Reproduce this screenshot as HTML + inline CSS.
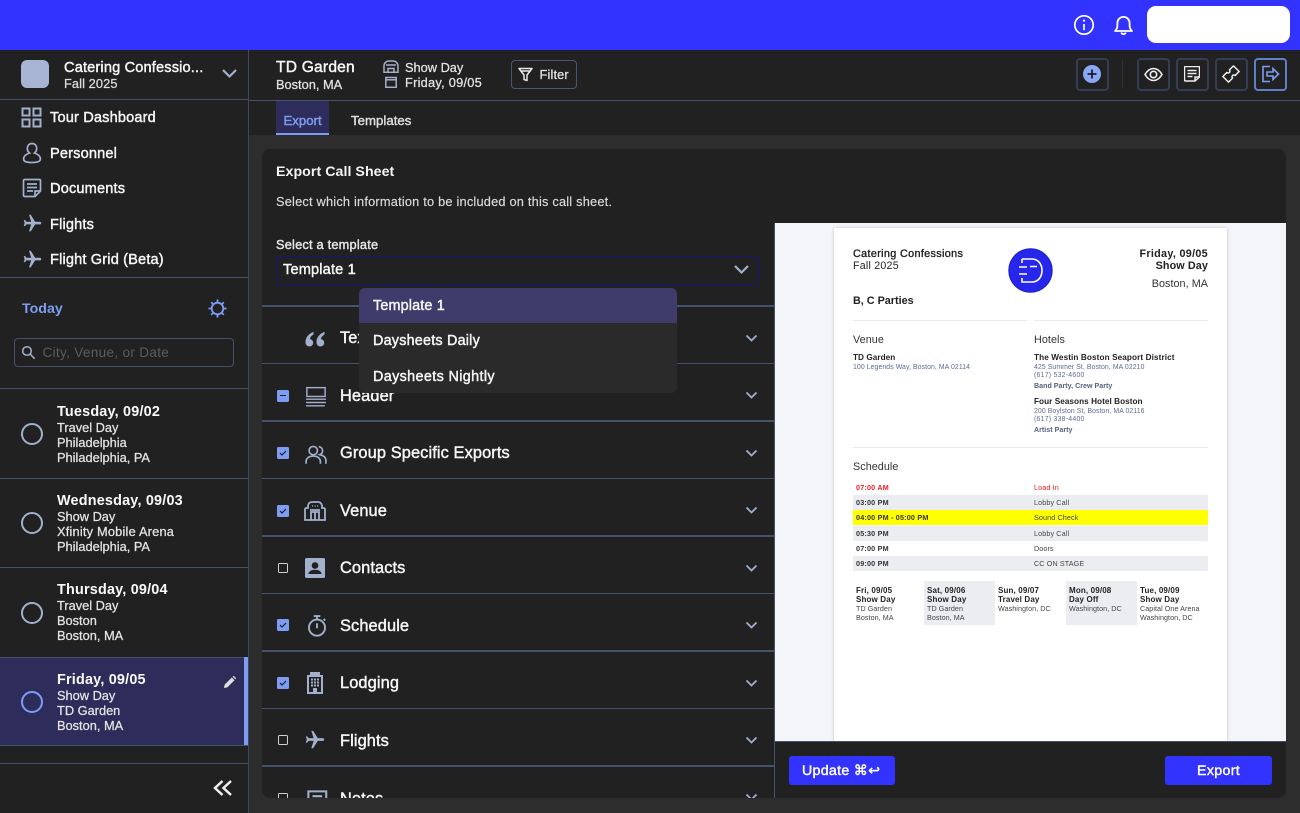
<!DOCTYPE html>
<html lang="en"><head><meta charset="utf-8"><title>Export Call Sheet</title>
<style>
html,body{margin:0;padding:0;width:1300px;height:813px;overflow:hidden;background:#2d2d2d}
body{font-family:"Liberation Sans",sans-serif;color:#f0f0f0;position:relative}
div,svg{position:absolute}
.t{position:absolute;white-space:nowrap;line-height:0;letter-spacing:.25px}
.m{-webkit-text-stroke:.42px currentColor}
.h{background:#46526c;height:1px}
.nav{font-size:14.6px;left:50px;color:#f6f6f6;letter-spacing:.15px}
.row{font-size:16.4px;left:340px;color:#f6f6f6;letter-spacing:.1px}
.d1{left:57px;font-size:14.4px;font-weight:700;color:#f9f9f9;letter-spacing:.2px}
.d2{left:57px;font-size:12.8px;color:#e4e4e4;-webkit-text-stroke:.25px currentColor;letter-spacing:0}
.ib{width:33px;height:33px;top:58px;border:2px solid #333e54;border-radius:4px;box-sizing:border-box}
.cb{left:278px;width:8px;height:8px;border:1.5px solid #cfcfcf;border-radius:1.5px}
.cb.on{width:12px;height:12px;border:0;background:#7d9df2;left:277px}
.ch{left:745px;width:13px;height:8px}
.ic{left:304px;width:22px;height:22px;fill:none;stroke:#a3b0cc}
.p{color:#222;font-size:10.6px}
.s{color:#5b6b92;font-size:6.9px;letter-spacing:.08px}
.b8{color:#222;font-size:8.2px;font-weight:700;letter-spacing:.05px}
.g{color:#55607f;font-size:7.1px;font-weight:700;letter-spacing:.02px}
.st{color:#333;font-size:7.2px;font-weight:700;letter-spacing:.2px}
.sr{color:#444;font-size:7.2px;letter-spacing:.12px}
.db{color:#222;font-size:8px;font-weight:700;letter-spacing:.15px}
.dr{color:#444;font-size:7.2px;letter-spacing:.05px}
.bar{background:#ecedf1;left:853px;width:355px}
</style></head><body>

<!-- top bar -->
<div style="left:0;top:0;width:1300px;height:50px;background:#3333ff"></div>
<svg style="left:1073px;top:14px" width="22" height="22" viewBox="0 0 22 22" fill="none" stroke="#fff" stroke-width="1.7"><circle cx="11" cy="11" r="9.2"/><path d="M11 10v6.200"/><circle cx="11" cy="6.600" r="1.100" fill="#fff" stroke="none"/></svg>
<svg style="left:1113px;top:14px" width="21" height="22" viewBox="0 0 21 22" fill="none" stroke="#fff" stroke-width="1.8" stroke-linejoin="round"><path d="M2 17c1.800-1.600 2.400-3 2.400-5.600V9a6.100 6.100 0 0 1 12.200 0v2.400c0 2.600.6 4 2.400 5.600z"/><path d="M8.300 18.500a2.300 2.300 0 0 0 4.400 0"/></svg>
<div style="left:1147px;top:6px;width:143px;height:37px;background:#fff;border-radius:9px"></div>

<!-- sidebar -->
<div style="left:0;top:50px;width:248px;height:763px;background:#212121"></div>
<div style="left:248px;top:50px;width:1px;height:763px;background:#3d4960"></div>
<div style="left:21px;top:60px;width:28px;height:28px;border-radius:6px;background:#a7b4d3"></div>
<span class="t m" style="left:64px;top:67.500px;font-size:14.6px;color:#f6f6f6;letter-spacing:.15px">Catering Confessio...</span>
<span class="t" style="left:64px;top:83.500px;font-size:12.8px;color:#dcdcdc;letter-spacing:.1px;-webkit-text-stroke:.25px #dcdcdc">Fall 2025</span>
<svg style="left:221px;top:68px" width="17" height="11" viewBox="0 0 17 11" fill="none" stroke="#a3b0cc" stroke-width="2.200"><path d="M2 2l6.500 6.500L15 2"/></svg>
<div class="h" style="left:0;top:99px;width:248px"></div>

<svg style="left:21px;top:107px" width="21" height="21" viewBox="0 0 21 21" fill="none" stroke="#a3b0cc" stroke-width="2"><rect x="1.500" y="1.500" width="7" height="7"/><rect x="12.500" y="1.500" width="7" height="7"/><rect x="1.500" y="12.500" width="7" height="7"/><rect x="12.500" y="12.500" width="7" height="7"/></svg>
<span class="t nav m" style="top:118px">Tour Dashboard</span>
<svg style="left:22px;top:142px" width="20" height="22" viewBox="0 0 20 22" fill="none" stroke="#a3b0cc" stroke-width="1.700"><path d="M10 1.500c3 0 4.700 2.300 4.700 5 0 2-1 3.500-2.300 4.500 3.700 1.200 6 3.300 6 6 0 2.500-2.500 3.500-8.400 3.500S1.600 19.500 1.600 17c0-2.700 2.300-4.800 6-6-1.300-1-2.300-2.500-2.300-4.500 0-2.700 1.700-5 4.700-5z"/></svg>
<span class="t nav m" style="top:153.500px">Personnel</span>
<svg style="left:22px;top:178px" width="20" height="20" viewBox="0 0 20 20" fill="none" stroke="#a3b0cc" stroke-width="1.700"><path d="M13 18.500H2.500a1 1 0 0 1-1-1v-15a1 1 0 0 1 1-1h15a1 1 0 0 1 1 1V13z"/><path d="M5 6h10M5 9.500h10M5 13h6M13 18.500V13h5.500"/></svg>
<span class="t nav m" style="top:188.500px">Documents</span>
<svg style="left:21.500px;top:213px" width="21" height="21" viewBox="0 0 24 24" fill="#a3b0cc"><path transform="rotate(90 12 12)" d="M21 16v-2l-8-5V3.500c0-.83-.67-1.500-1.500-1.500S10 2.670 10 3.500V9l-8 5v2l8-2.500V19l-2 1.500V22l3.500-1 3.500 1v-1.500L13 19v-5.500l8 2.500z"/></svg>
<span class="t nav m" style="top:224.500px">Flights</span>
<svg style="left:21.500px;top:248.500px" width="21" height="21" viewBox="0 0 24 24" fill="#a3b0cc"><path transform="rotate(90 12 12)" d="M21 16v-2l-8-5V3.500c0-.83-.67-1.500-1.500-1.500S10 2.670 10 3.500V9l-8 5v2l8-2.500V19l-2 1.500V22l3.500-1 3.500 1v-1.500L13 19v-5.500l8 2.500z"/></svg>
<span class="t nav m" style="top:259.500px">Flight Grid (Beta)</span>
<div class="h" style="left:0;top:277px;width:248px"></div>

<span class="t" style="left:22px;top:309px;font-size:14.2px;font-weight:700;color:#7d9df2;letter-spacing:0">Today</span>
<svg style="left:207px;top:298px" width="21" height="21" viewBox="0 0 21 21" fill="none" stroke="#7d9df2" stroke-width="1.800"><circle cx="10.500" cy="10.500" r="5.800"/><path d="M10.500 1.500v2.500M10.500 17v2.500M1.500 10.500H4M17 10.500h2.500M4.200 4.200l1.700 1.700M15.100 15.100l1.700 1.700M4.200 16.800l1.700-1.700M15.100 5.900l1.700-1.700"/></svg>
<div style="left:14px;top:338px;width:218px;height:27px;border:1px solid #46526c;border-radius:4px"></div>
<svg style="left:21px;top:345px" width="15" height="15" viewBox="0 0 15 15" fill="none" stroke="#a3b0cc" stroke-width="1.500"><circle cx="6" cy="6" r="4.300"/><path d="M9.200 9.200l4.500 4.500"/></svg>
<span class="t" style="left:42.500px;top:352.500px;font-size:13.600px;color:#5c5c5c;letter-spacing:.3px">City, Venue, or Date</span>
<div class="h" style="left:0;top:388px;width:248px"></div>

<span class="t d1" style="top:411.500px">Tuesday, 09/02</span>
<span class="t d2" style="top:427.500px">Travel Day</span>
<span class="t d2" style="top:442.500px">Philadelphia</span>
<span class="t d2" style="top:457.500px">Philadelphia, PA</span>
<div style="left:21px;top:422.500px;width:18px;height:18px;border:2px solid #a3b0cc;border-radius:50%"></div>
<div class="h" style="left:0;top:477.500px;width:248px"></div>

<span class="t d1" style="top:500.500px">Wednesday, 09/03</span>
<span class="t d2" style="top:516.500px">Show Day</span>
<span class="t d2" style="top:531.500px;letter-spacing:.2px">Xfinity Mobile Arena</span>
<span class="t d2" style="top:547px">Philadelphia, PA</span>
<div style="left:21px;top:512px;width:18px;height:18px;border:2px solid #a3b0cc;border-radius:50%"></div>
<div class="h" style="left:0;top:567px;width:248px"></div>

<span class="t d1" style="top:590px">Thursday, 09/04</span>
<span class="t d2" style="top:606px">Travel Day</span>
<span class="t d2" style="top:621px">Boston</span>
<span class="t d2" style="top:636px">Boston, MA</span>
<div style="left:21px;top:601.500px;width:18px;height:18px;border:2px solid #a3b0cc;border-radius:50%"></div>

<div style="left:0;top:656.500px;width:248px;height:89.500px;background:#2e2c5a;border-top:1px solid #46526c;border-bottom:1px solid #46526c;box-sizing:border-box"></div>
<div style="left:244px;top:657px;width:4px;height:88px;background:#7d9df2"></div>
<span class="t d1" style="top:679.500px">Friday, 09/05</span>
<span class="t d2" style="top:695.500px">Show Day</span>
<span class="t d2" style="top:710.500px">TD Garden</span>
<span class="t d2" style="top:725.500px">Boston, MA</span>
<div style="left:21px;top:691px;width:18px;height:18px;border:2px solid #7d9df2;border-radius:50%"></div>
<svg style="left:223px;top:675px" width="13" height="14" viewBox="0 0 13 14" fill="#e0e0e0"><path d="M1 13l.6-3.300L8.800 2.500l2.700 2.700-7.200 7.200zM9.600 1.700l1-1 2.600 2.600-1 1z"/></svg>
<div class="h" style="left:0;top:762.500px;width:248px"></div>
<svg style="left:213px;top:779px" width="20" height="18" viewBox="0 0 20 18" fill="none" stroke="#eee" stroke-width="2.500"><path d="M9.500 2L2 9l7.500 7M18 2l-7.500 7 7.500 7"/></svg>

<!-- top header -->
<div style="left:249px;top:50px;width:1051px;height:85px;background:#212121"></div>
<div style="left:249px;top:99.500px;width:1051px;height:1.500px;background:#46526c"></div>
<span class="t m" style="left:276px;top:67.500px;font-size:15.600px;color:#f7f7f7;letter-spacing:.2px">TD Garden</span>
<span class="t d2" style="left:276px;top:84.500px">Boston, MA</span>
<svg style="left:383px;top:60px" width="16" height="13" viewBox="0 0 16 13" fill="none" stroke="#a3b0cc" stroke-width="1.500"><path d="M1 12.200V6a5 5 0 0 1 5-5h4a5 5 0 0 1 5 5v6.200zM5 12.200V8.500h6v3.700M3 5h10"/></svg>
<svg style="left:385px;top:76px" width="12" height="12" viewBox="0 0 12 12" fill="none" stroke="#a3b0cc" stroke-width="1.500"><rect x=".8" y="1.500" width="10.400" height="9.800"/><path d="M.8 3.800h10.400"/></svg>
<span class="t d2" style="left:405px;top:67.500px">Show Day</span>
<span class="t d2" style="left:405px;top:82.500px;letter-spacing:.25px">Friday, 09/05</span>
<div style="left:511px;top:60px;width:64px;height:27px;border:1px solid #4b5772;border-radius:4px"></div>
<svg style="left:518px;top:67px" width="15" height="15" viewBox="0 0 15 15" fill="none" stroke="#e8e8e8" stroke-width="1.500" stroke-linejoin="round"><path d="M1 1.500h13L9 8v5.500l-3-1V8zM3 4h9"/></svg>
<span class="t d2" style="left:539.500px;top:75px;letter-spacing:.15px">Filter</span>

<div class="ib" style="left:1076px"></div>
<svg style="left:1083px;top:65px" width="18" height="18" viewBox="0 0 18 18"><circle cx="9" cy="9" r="9" fill="#8aa9f5"/><path d="M9 4.500v9M4.500 9h9" stroke="#1d1d30" stroke-width="1.800"/></svg>
<div style="left:1122px;top:60px;width:1px;height:28px;background:#333"></div>
<div class="ib" style="left:1137px"></div>
<svg style="left:1144px;top:67px" width="19" height="15" viewBox="0 0 19 15" fill="none" stroke="#eee" stroke-width="1.600"><path d="M1 7.500C3.500 3.200 6 1.500 9.500 1.500S15.500 3.200 18 7.500c-2.500 4.300-5 6-8.500 6S3.500 11.800 1 7.500z"/><circle cx="9.500" cy="7.500" r="3.200"/></svg>
<div class="ib" style="left:1176px"></div>
<svg style="left:1184px;top:66px" width="16" height="16" viewBox="0 0 16 16" fill="none" stroke="#eee" stroke-width="1.500"><path d="M11 15H1.500a1 1 0 0 1-1-1V1.500a1 1 0 0 1 1-1h13a1 1 0 0 1 1 1V11z"/><path d="M3.500 4.500h9M3.500 7.500h9M3.500 10.500h5M11 15v-4h4.500"/></svg>
<div class="ib" style="left:1215px"></div>
<svg style="left:1222px;top:65px" width="18" height="18" viewBox="0 0 18 18" fill="none" stroke="#eee" stroke-width="1.500" stroke-linejoin="round"><path transform="rotate(-45 9 9)" d="M1.500 5H7.200a1.800 1.800 0 0 0 3.600 0h5.700v8H10.800a1.800 1.800 0 0 0-3.600 0H1.500z"/></svg>
<div class="ib" style="left:1254px;border-color:#5f7fc8"></div>
<svg style="left:1261px;top:65px" width="19" height="18" viewBox="0 0 19 18" fill="none" stroke="#7d9df2" stroke-width="1.600"><path d="M9 1.500H2v15h7M6 7h6V3.500L17.500 9 12 14.500V11H6z"/></svg>

<!-- tabs -->
<div style="left:276px;top:101px;width:53px;height:34px;background:#2e2c5a;border-bottom:2px solid #7d9df2;box-sizing:border-box"></div>
<span class="t m" style="left:283.500px;top:120.500px;font-size:13.200px;color:#7d9df2;letter-spacing:0">Export</span>
<span class="t m" style="left:351px;top:120.500px;font-size:13.200px;color:#dcdcdc;letter-spacing:.03px">Templates</span>

<!-- card -->
<div style="left:0;top:0;width:1300px;height:813px;clip-path:inset(149px 14px 15px 262px round 8px)">
<div style="left:262px;top:149px;width:1024px;height:649px;background:#212121"></div>
<span class="t" style="left:276px;top:172px;font-size:14.200px;font-weight:700;color:#f5f5f5;letter-spacing:.05px">Export Call Sheet</span>
<span class="t" style="left:276px;top:202px;font-size:12.800px;color:#dcdcdc;letter-spacing:.2px;-webkit-text-stroke:.15px #dcdcdc">Select which information to be included on this call sheet.</span>
<span class="t m" style="left:276px;top:245px;font-size:12.800px;color:#e4e4e4;letter-spacing:.2px">Select a template</span>
<div style="left:276px;top:256px;width:481px;height:27px;border:1px solid #14147c;border-radius:3px"></div>
<span class="t m" style="left:283px;top:270px;font-size:14.600px;color:#f6f6f6;letter-spacing:.15px">Template 1</span>
<svg style="left:733px;top:264px" width="17" height="11" viewBox="0 0 17 11" fill="none" stroke="#a3b0cc" stroke-width="2.200"><path d="M2 2l6.500 6.500L15 2"/></svg>

<div class="h" style="left:262px;top:305px;width:512px;height:1.500px"></div>
<div class="h" style="left:262px;top:362.500px;width:512px;height:1.500px"></div>
<div class="h" style="left:262px;top:420px;width:512px;height:1.500px"></div>
<div class="h" style="left:262px;top:477.500px;width:512px;height:1.500px"></div>
<div class="h" style="left:262px;top:535px;width:512px;height:1.500px"></div>
<div class="h" style="left:262px;top:592.500px;width:512px;height:1.500px"></div>
<div class="h" style="left:262px;top:650px;width:512px;height:1.500px"></div>
<div class="h" style="left:262px;top:707.500px;width:512px;height:1.500px"></div>
<div class="h" style="left:262px;top:765px;width:512px;height:1.500px"></div>

<!-- row: Text -->
<svg style="left:305px;top:331px" width="20" height="16" viewBox="0 0 20 16" fill="#a3b0cc"><path d="M8.500.8C3.800 2.800.5 6.300.5 11c0 2.700 1.600 4.500 3.900 4.500 2.200 0 3.800-1.500 3.800-3.700 0-2.100-1.400-3.500-3.400-3.700.5-2 1.900-3.500 3.700-4.700zM19.500.8C14.800 2.800 11.500 6.300 11.500 11c0 2.700 1.600 4.500 3.900 4.500 2.200 0 3.800-1.500 3.800-3.700 0-2.100-1.400-3.500-3.400-3.700.5-2 1.900-3.500 3.700-4.700z"/></svg>
<span class="t row m" style="top:338px">Text</span>
<!-- row: Header -->
<div class="cb on" style="top:389.500px"></div><div style="left:280px;top:395px;width:6px;height:1.300px;background:#1d1d30"></div>
<svg class="ic" style="left:305px;top:386px" width="20" height="19" viewBox="0 0 20 19" stroke-width="1.300"><rect x="1.700" y="1" width="16.600" height="8"/><path d="M1 11.500h18M1 14.500h18M1 17.500h17"/></svg>
<span class="t row m" style="top:395.500px">Header</span>
<!-- row: Group -->
<div class="cb on" style="top:447px"></div><svg style="left:279px;top:450px" width="8" height="6" viewBox="0 0 8 6" fill="none" stroke="#1d1d30" stroke-width="1.200"><path d="M1 3l2 2 4-4"/></svg>
<svg class="ic" style="left:305px;top:444px" width="20" height="18" viewBox="0 0 20 18" stroke-width="1.500"><circle cx="7.500" cy="5" r="3.800"/><path d="M1 17v-2c0-3 2.500-5 6.500-5s6.500 2 6.500 5v2M12.500 1.300c2.200.4 3.500 2 3.500 3.800 0 1.700-1 3-2.500 3.600 3 .7 5.500 2.300 5.500 5.300v3"/></svg>
<span class="t row m" style="top:453px">Group Specific Exports</span>
<!-- row: Venue -->
<div class="cb on" style="top:504.500px"></div><svg style="left:279px;top:507.500px" width="8" height="6" viewBox="0 0 8 6" fill="none" stroke="#1d1d30" stroke-width="1.200"><path d="M1 3l2 2 4-4"/></svg>
<svg class="ic" style="left:304px;top:500px" width="22" height="20" viewBox="0 0 22 20" stroke-width="1.800"><path d="M1 19V8.500c0-1 .5-1.500 1.500-1.500H4V5c0-2 1.500-4 4-4h6c2.500 0 4 2 4 4v2h1.500c1 0 1.500.5 1.500 1.500V19zM7 19v-8h8v8M11 11v8M6 9h10"/><path d="M8 5h1M10.500 5h1M13 5h1" stroke-width="1.200"/></svg>
<span class="t row m" style="top:510.500px">Venue</span>
<!-- row: Contacts -->
<div class="cb" style="top:562.500px"></div>
<svg style="left:305px;top:558px" width="20" height="20" viewBox="0 0 20 20"><rect width="20" height="20" rx="1.500" fill="#a3b0cc"/><circle cx="10" cy="7.500" r="3.300" fill="#212121"/><path d="M3.500 16c0-2.800 3-4.300 6.500-4.300s6.500 1.500 6.500 4.300z" fill="#212121"/></svg>
<span class="t row m" style="top:568px">Contacts</span>
<!-- row: Schedule -->
<div class="cb on" style="top:619px"></div><svg style="left:279px;top:622px" width="8" height="6" viewBox="0 0 8 6" fill="none" stroke="#1d1d30" stroke-width="1.200"><path d="M1 3l2 2 4-4"/></svg>
<svg class="ic" style="left:306px;top:615px" width="18" height="20" viewBox="0 0 18 20" stroke-width="1.700"><circle cx="9" cy="11.500" r="7.300"/><path d="M6 1h6M9 1v3M9 7.500V12M15 3.500l1.500 1.500"/></svg>
<span class="t row m" style="top:625.500px">Schedule</span>
<!-- row: Lodging -->
<div class="cb on" style="top:677px"></div><svg style="left:279px;top:680px" width="8" height="6" viewBox="0 0 8 6" fill="none" stroke="#1d1d30" stroke-width="1.200"><path d="M1 3l2 2 4-4"/></svg>
<svg style="left:307px;top:672px" width="16" height="22" viewBox="0 0 16 22"><path fill="#a3b0cc" fill-rule="evenodd" d="M0 3h3V0h10v3h3v19H0zM2 5v15h4v-4h4v4h4V5z"/><g fill="#a3b0cc"><rect x="4" y="6.500" width="2" height="2"/><rect x="7" y="6.500" width="2" height="2"/><rect x="10" y="6.500" width="2" height="2"/><rect x="4" y="9.500" width="2" height="2"/><rect x="7" y="9.500" width="2" height="2"/><rect x="10" y="9.500" width="2" height="2"/><rect x="4" y="12.500" width="2" height="2"/><rect x="7" y="12.500" width="2" height="2"/><rect x="10" y="12.500" width="2" height="2"/></g></svg>
<span class="t row m" style="top:683px">Lodging</span>
<!-- row: Flights -->
<div class="cb" style="top:734.500px"></div>
<svg style="left:304px;top:729px" width="22" height="22" viewBox="0 0 24 24" fill="#a3b0cc"><path transform="rotate(90 12 12)" d="M21 16v-2l-8-5V3.500c0-.83-.67-1.500-1.500-1.500S10 2.670 10 3.500V9l-8 5v2l8-2.500V19l-2 1.500V22l3.500-1 3.500 1v-1.500L13 19v-5.500l8 2.500z"/></svg>
<span class="t row m" style="top:740.500px">Flights</span>
<!-- row: Notes -->
<div class="cb" style="top:792.500px"></div>
<svg class="ic" style="left:307px;top:790px" width="16" height="16" viewBox="0 0 16 16" stroke-width="1.500"><path d="M14 8V1H1v14h8M4 4.500h7M4 7.500h6"/></svg>
<span class="t row m" style="top:799px">Notes</span>

<svg class="ch" style="top:334px" viewBox="0 0 13 8" fill="none" stroke="#a3b0cc" stroke-width="1.800"><path d="M1.500 1.500l5 5 5-5"/></svg>
<svg class="ch" style="top:391px" viewBox="0 0 13 8" fill="none" stroke="#a3b0cc" stroke-width="1.800"><path d="M1.500 1.500l5 5 5-5"/></svg>
<svg class="ch" style="top:449px" viewBox="0 0 13 8" fill="none" stroke="#a3b0cc" stroke-width="1.800"><path d="M1.500 1.500l5 5 5-5"/></svg>
<svg class="ch" style="top:506px" viewBox="0 0 13 8" fill="none" stroke="#a3b0cc" stroke-width="1.800"><path d="M1.500 1.500l5 5 5-5"/></svg>
<svg class="ch" style="top:564px" viewBox="0 0 13 8" fill="none" stroke="#a3b0cc" stroke-width="1.800"><path d="M1.500 1.500l5 5 5-5"/></svg>
<svg class="ch" style="top:621px" viewBox="0 0 13 8" fill="none" stroke="#a3b0cc" stroke-width="1.800"><path d="M1.500 1.500l5 5 5-5"/></svg>
<svg class="ch" style="top:679px" viewBox="0 0 13 8" fill="none" stroke="#a3b0cc" stroke-width="1.800"><path d="M1.500 1.500l5 5 5-5"/></svg>
<svg class="ch" style="top:736px" viewBox="0 0 13 8" fill="none" stroke="#a3b0cc" stroke-width="1.800"><path d="M1.500 1.500l5 5 5-5"/></svg>
<svg class="ch" style="top:793px" viewBox="0 0 13 8" fill="none" stroke="#a3b0cc" stroke-width="1.800"><path d="M1.500 1.500l5 5 5-5"/></svg>

<!-- dropdown -->
<div style="left:359px;top:288px;width:318px;height:105px;background:#2a2a2a;border-radius:6px;overflow:hidden"><div style="left:0;top:0;width:318px;height:35px;background:#3f3c6b"></div></div>
<span class="t m" style="left:373px;top:305.500px;font-size:14.400px;color:#f6f6f6;letter-spacing:.15px">Template 1</span>
<span class="t m" style="left:373px;top:341px;font-size:14.400px;color:#f6f6f6;letter-spacing:.2px">Daysheets Daily</span>
<span class="t m" style="left:373px;top:376.500px;font-size:14.400px;color:#f6f6f6;letter-spacing:.35px">Daysheets Nightly</span>

<!-- preview -->
<div style="left:774px;top:223px;width:512px;height:518px;background:#f4f5f9;overflow:hidden">
  <div style="left:60px;top:5px;width:393px;height:520px;background:#fff;box-shadow:0 0 3px rgba(0,0,0,.22)"></div>
</div>
<div style="left:774px;top:223px;width:1px;height:575px;background:#46526c"></div>
<div style="left:774px;top:741px;width:512px;height:1px;background:#46526c"></div>

<span class="t p m" style="left:853px;top:253.500px;font-size:10.800px;letter-spacing:.35px;-webkit-text-stroke:.35px #222">Catering Confessions</span>
<span class="t p" style="left:853px;top:265.500px;font-size:10.600px">Fall 2025</span>
<span class="t p" style="left:853px;top:300.500px;font-size:10.800px;font-weight:700;letter-spacing:0">B, C Parties</span>
<svg style="left:1008px;top:248px" width="45" height="45" viewBox="0 0 45 45"><circle cx="22.500" cy="22.500" r="21.700" fill="#2727ec" stroke="#1c1cc8" stroke-width="1"/><g fill="none" stroke="#fff" stroke-width="1.600"><path d="M14 11h10c6 0 10 5 10 11.500S30 34 24 34H14v-4M14 11v4"/><path d="M11 19h8M11 26h8M22 18.500h7"/></g></svg>
<span class="t p" style="right:92px;top:253.500px;font-size:10.800px;font-weight:700;letter-spacing:.3px">Friday, 09/05</span>
<span class="t p" style="right:92px;top:266px;font-size:10.800px;font-weight:700;letter-spacing:.1px">Show Day</span>
<span class="t p" style="right:92px;top:284px;font-size:10.800px;color:#333;letter-spacing:.05px">Boston, MA</span>
<div style="left:853px;top:320px;width:174px;height:1px;background:#e9eaf0"></div>
<div style="left:1034px;top:320px;width:174px;height:1px;background:#e9eaf0"></div>
<span class="t p" style="left:853px;top:340px;font-size:10.800px;color:#333;letter-spacing:.05px">Venue</span>
<span class="t p" style="left:1034px;top:340px;font-size:10.800px;color:#333;letter-spacing:.05px">Hotels</span>
<span class="t b8" style="left:853px;top:358px">TD Garden</span>
<span class="t s" style="left:853px;top:367.500px">100 Legends Way, Boston, MA 02114</span>
<span class="t b8" style="left:1034px;top:358px;letter-spacing:.1px">The Westin Boston Seaport District</span>
<span class="t s" style="left:1034px;top:367.500px">425 Summer St, Boston, MA 02210</span>
<span class="t s" style="left:1034px;top:376px;letter-spacing:.25px">(617) 532-4600</span>
<span class="t g" style="left:1034px;top:386px">Band Party, Crew Party</span>
<span class="t b8" style="left:1034px;top:402px">Four Seasons Hotel Boston</span>
<span class="t s" style="left:1034px;top:411.500px">200 Boylston St, Boston, MA 02116</span>
<span class="t s" style="left:1034px;top:420px;letter-spacing:.25px">(617) 338-4400</span>
<span class="t g" style="left:1034px;top:430px">Artist Party</span>
<div style="left:853px;top:447px;width:355px;height:1px;background:#e9eaf0"></div>
<span class="t p" style="left:853px;top:467px;font-size:10.800px;color:#333;letter-spacing:.05px">Schedule</span>

<div class="bar" style="top:494.500px;height:15px"></div>
<div class="bar" style="top:510px;height:15px;background:#ffff00"></div>
<div class="bar" style="top:525.500px;height:15px"></div>
<div class="bar" style="top:556px;height:15px"></div>
<span class="t st" style="left:856px;top:487.500px;color:#f01c1c">07:00 AM</span><span class="t sr" style="left:1034px;top:487.500px;color:#f01c1c">Load In</span>
<span class="t st" style="left:856px;top:502.500px">03:00 PM</span><span class="t sr" style="left:1034px;top:502.500px">Lobby Call</span>
<span class="t st" style="left:856px;top:518px">04:00 PM - 05:00 PM</span><span class="t sr" style="left:1034px;top:518px">Sound Check</span>
<span class="t st" style="left:856px;top:533.500px">05:30 PM</span><span class="t sr" style="left:1034px;top:533.500px">Lobby Call</span>
<span class="t st" style="left:856px;top:548.500px">07:00 PM</span><span class="t sr" style="left:1034px;top:548.500px">Doors</span>
<span class="t st" style="left:856px;top:563.500px">09:00 PM</span><span class="t sr" style="left:1034px;top:563.500px">CC ON STAGE</span>

<div style="left:924px;top:581px;width:71px;height:44px;background:#ecedf1"></div>
<div style="left:1066px;top:581px;width:71px;height:44px;background:#ecedf1"></div>
<span class="t db" style="left:856px;top:590.500px">Fri, 09/05</span><span class="t db" style="left:856px;top:600px">Show Day</span><span class="t dr" style="left:856px;top:609px">TD Garden</span><span class="t dr" style="left:856px;top:617.500px">Boston, MA</span>
<span class="t db" style="left:927px;top:590.500px">Sat, 09/06</span><span class="t db" style="left:927px;top:600px">Show Day</span><span class="t dr" style="left:927px;top:609px">TD Garden</span><span class="t dr" style="left:927px;top:617.500px">Boston, MA</span>
<span class="t db" style="left:998px;top:590.500px">Sun, 09/07</span><span class="t db" style="left:998px;top:600px">Travel Day</span><span class="t dr" style="left:998px;top:609px">Washington, DC</span>
<span class="t db" style="left:1069px;top:590.500px">Mon, 09/08</span><span class="t db" style="left:1069px;top:600px">Day Off</span><span class="t dr" style="left:1069px;top:609px">Washington, DC</span>
<span class="t db" style="left:1140px;top:590.500px">Tue, 09/09</span><span class="t db" style="left:1140px;top:600px">Show Day</span><span class="t dr" style="left:1140px;top:609px">Capital One Arena</span><span class="t dr" style="left:1140px;top:617.500px">Washington, DC</span>

<!-- buttons -->
<div style="left:789px;top:756px;width:106px;height:29px;background:#3333ff;border-radius:3px"></div>
<span class="t m" style="left:802px;top:771px;font-size:14.200px;color:#fff;letter-spacing:.3px">Update ⌘↩</span>
<div style="left:1165px;top:756px;width:107px;height:29px;background:#3333ff;border-radius:3px"></div>
<span class="t m" style="left:1197px;top:771px;font-size:14.200px;color:#fff;letter-spacing:.35px">Export</span>
</div>
</body></html>
